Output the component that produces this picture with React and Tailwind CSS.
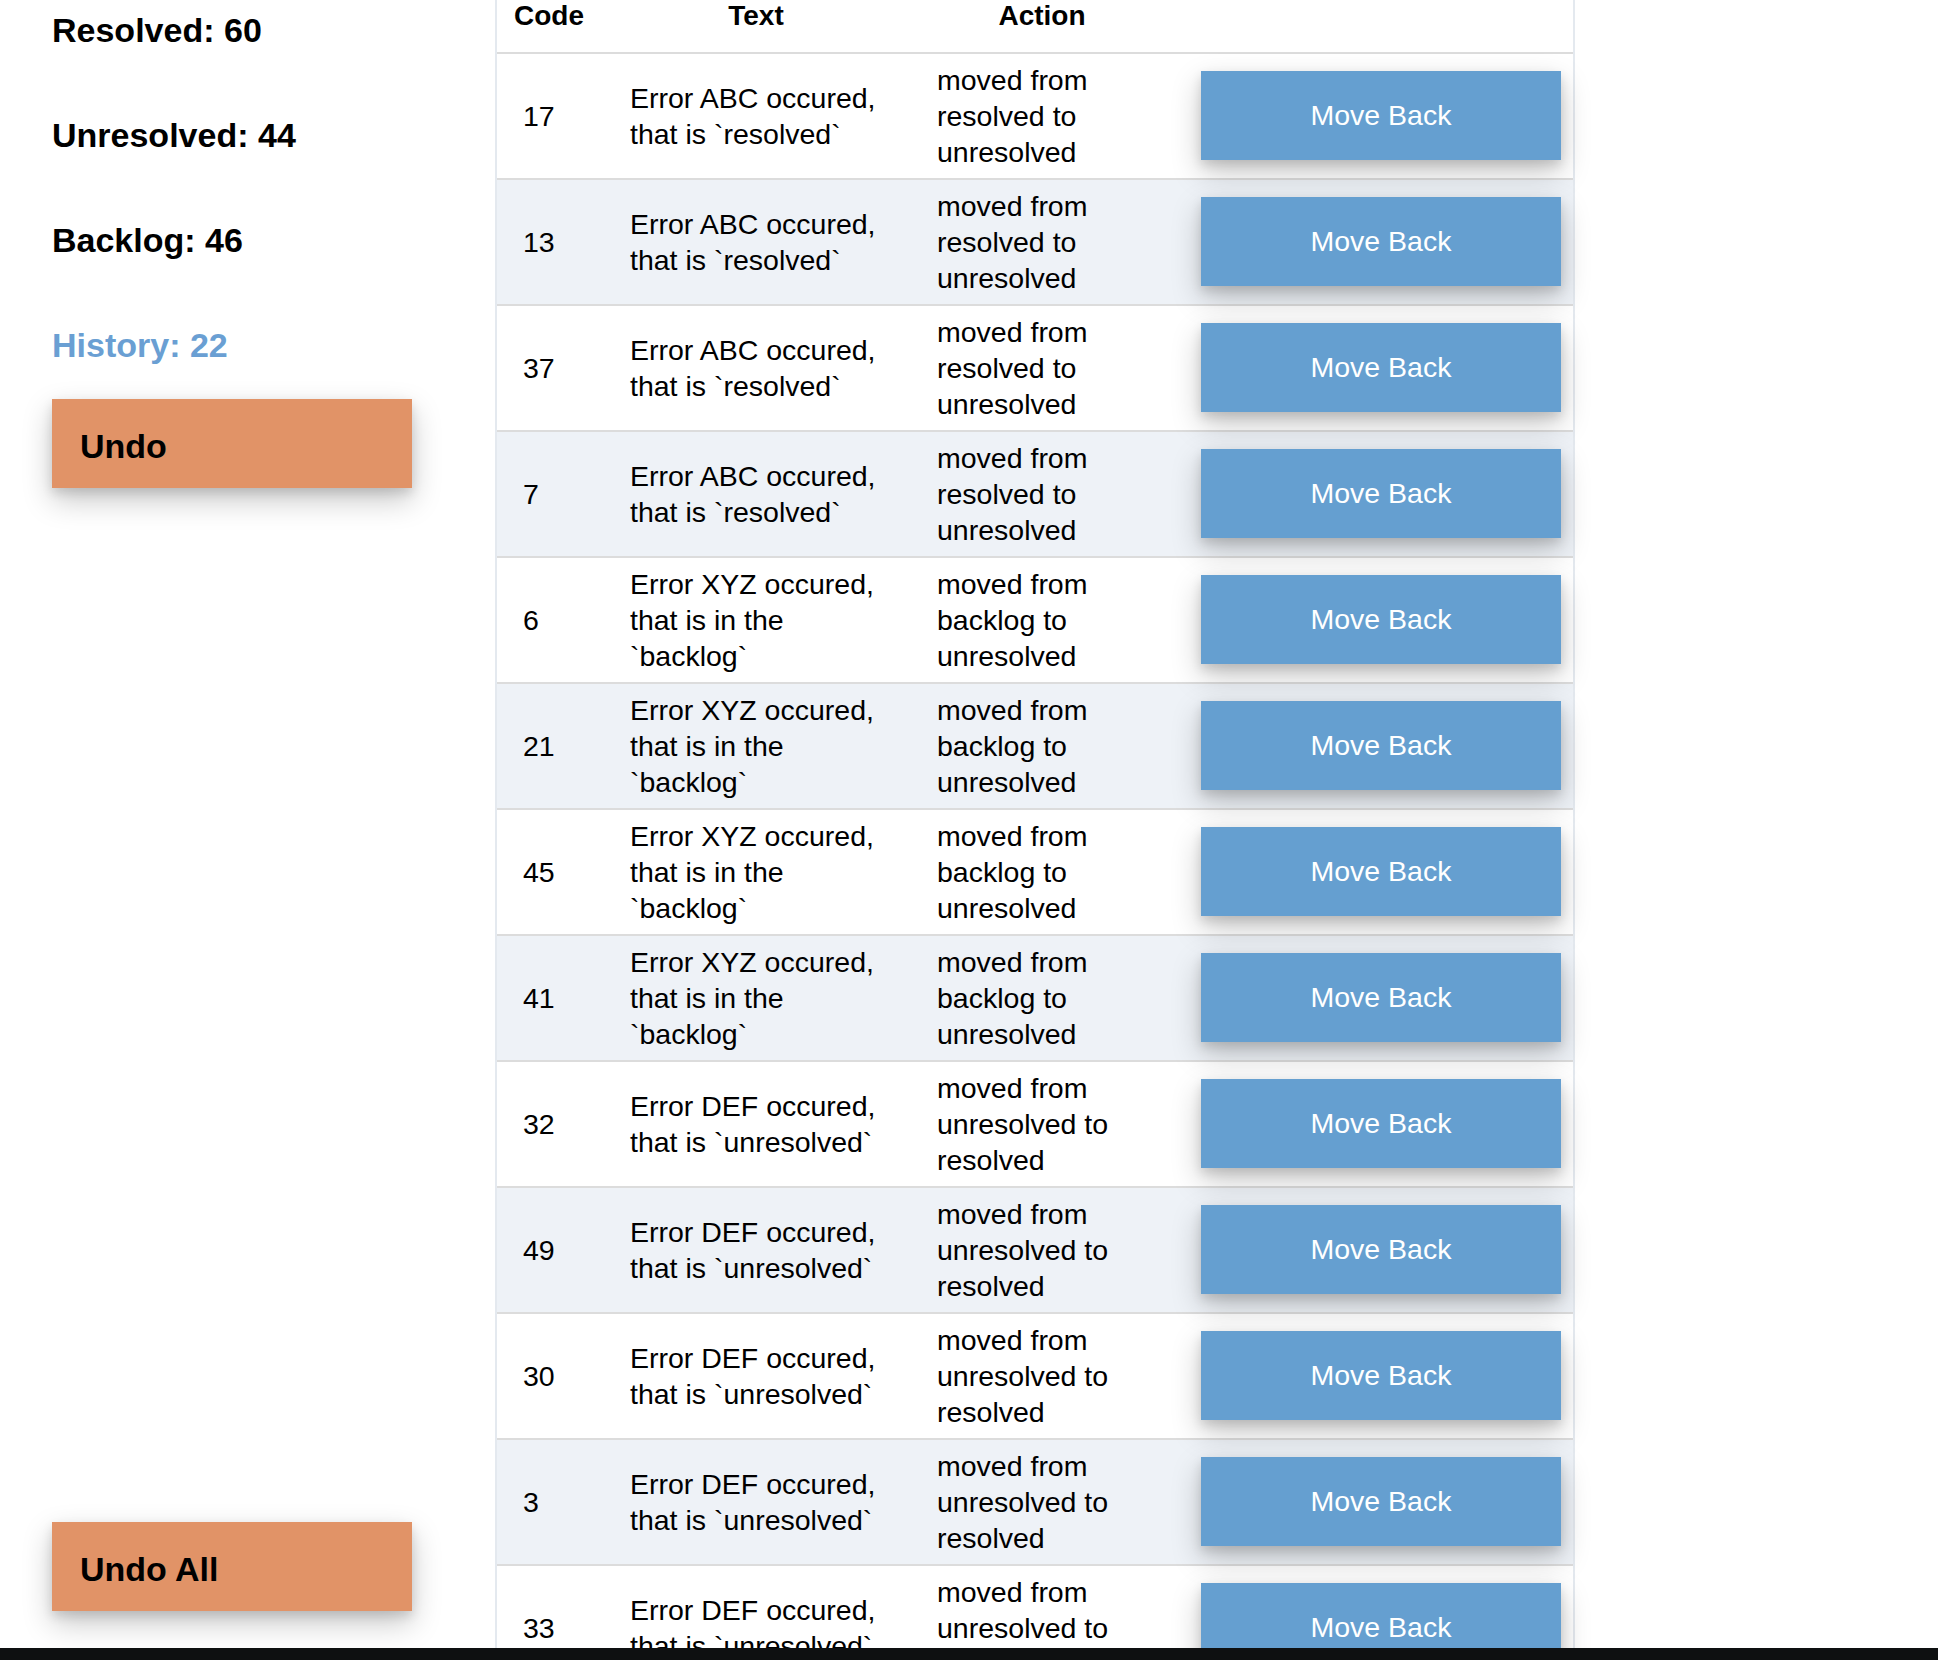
import React from 'react';

const rows = [
  { code: 17, text: 'Error ABC occured, that is `resolved`', action: 'moved from resolved to unresolved' },
  { code: 13, text: 'Error ABC occured, that is `resolved`', action: 'moved from resolved to unresolved' },
  { code: 37, text: 'Error ABC occured, that is `resolved`', action: 'moved from resolved to unresolved' },
  { code: 7, text: 'Error ABC occured, that is `resolved`', action: 'moved from resolved to unresolved' },
  { code: 6, text: 'Error XYZ occured, that is in the `backlog`', action: 'moved from backlog to unresolved' },
  { code: 21, text: 'Error XYZ occured, that is in the `backlog`', action: 'moved from backlog to unresolved' },
  { code: 45, text: 'Error XYZ occured, that is in the `backlog`', action: 'moved from backlog to unresolved' },
  { code: 41, text: 'Error XYZ occured, that is in the `backlog`', action: 'moved from backlog to unresolved' },
  { code: 32, text: 'Error DEF occured, that is `unresolved`', action: 'moved from unresolved to resolved' },
  { code: 49, text: 'Error DEF occured, that is `unresolved`', action: 'moved from unresolved to resolved' },
  { code: 30, text: 'Error DEF occured, that is `unresolved`', action: 'moved from unresolved to resolved' },
  { code: 3, text: 'Error DEF occured, that is `unresolved`', action: 'moved from unresolved to resolved' },
  { code: 33, text: 'Error DEF occured, that is `unresolved`', action: 'moved from unresolved to resolved' },
  { code: 28, text: 'Error DEF occured, that is `unresolved`', action: 'moved from unresolved to resolved' },
];

const shadow = 'shadow-[0_12px_28px_rgba(0,0,0,0.22),0_5px_10px_rgba(0,0,0,0.12)]';

function Counter({ label, count, active }) {
  return (
    <h2 className={`text-[34px] leading-[40px] font-bold ${active ? 'text-[#6a9fd3]' : 'text-black'}`}>
      {label}: {count}
    </h2>
  );
}

export default function App() {
  return (
    <div className="h-[1660px] overflow-hidden bg-white flex flex-col font-['Liberation_Sans',Arial,sans-serif] text-black">
      <div className="flex h-[1648px] overflow-hidden">
        {/* Sidebar */}
        <aside className="w-[495px] shrink-0 flex flex-col justify-between pl-[52px] pt-[10px] pb-[37px]">
          <div className="flex flex-col">
            <div className="flex flex-col gap-[65px]">
              <Counter label="Resolved" count={60} />
              <Counter label="Unresolved" count={44} />
              <Counter label="Backlog" count={46} />
              <Counter label="History" count={22} active />
            </div>
            <button className={`mt-[34px] w-[360px] h-[89px] bg-[#e19367] text-left pl-[28px] pt-[6px] text-[34px] font-bold ${shadow}`}>
              Undo
            </button>
          </div>
          <button className={`w-[360px] h-[89px] bg-[#e19367] text-left pl-[28px] pt-[6px] text-[34px] font-bold ${shadow}`}>
            Undo All
          </button>
        </aside>

        {/* History table */}
        <div className="w-[1080px] shrink-0 self-start border-x-2 border-[#e4e9ef]">
          <div className="grid grid-cols-[104px_310px_262px_400px] h-[54px] border-b-2 border-[#dcdcdc] text-[28px] leading-[32px] font-bold">
            <div className="text-center">Code</div>
            <div className="text-center">Text</div>
            <div className="text-center">Action</div>
            <div />
          </div>
          {rows.map((row, i) => (
            <div
              key={i}
              className={`grid grid-cols-[104px_310px_262px_400px] items-center h-[126px] border-b-2 border-[#dcdcdc] text-[28.5px] leading-[36px] ${i % 2 === 1 ? 'bg-[#eef2f7]' : 'bg-white'}`}
            >
              <div className="pl-[26px]">{row.code}</div>
              <div className="pl-[29px] pr-[11px]">{row.text}</div>
              <div className="pl-[26px] pr-[30px]">{row.action}</div>
              <div className="flex justify-end pr-[12px]">
                <button className={`w-[360px] h-[89px] -mt-[2px] bg-[#659fd0] text-white text-[28.5px] ${shadow}`}>
                  Move Back
                </button>
              </div>
            </div>
          ))}
        </div>
      </div>
      <div className="h-[12px] bg-[#0e1011]" />
    </div>
  );
}
